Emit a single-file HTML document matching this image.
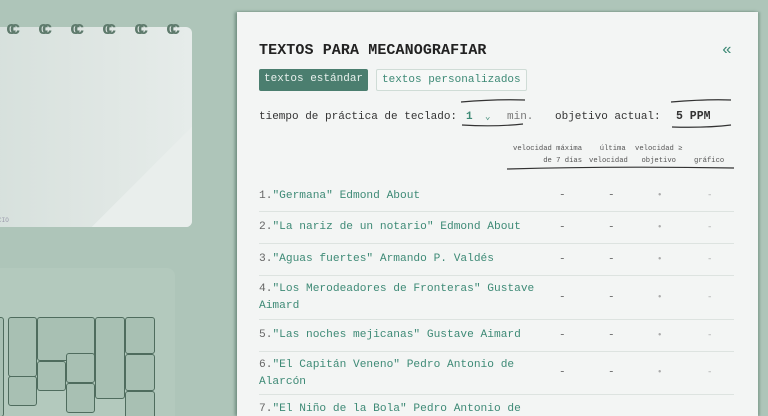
<!DOCTYPE html>
<html><head><meta charset="utf-8"><style>
*{margin:0;padding:0;box-sizing:border-box}
html,body{width:768px;height:416px;overflow:hidden}
body{background:#aec5b9;font-family:"Liberation Mono",monospace;position:relative}
.note{position:absolute;left:-10px;top:27px;width:202px;height:200px;border-radius:6px;background:linear-gradient(90deg,#d6e0dc,#e0e7e4 60%,#e6ecea);overflow:hidden}
.note:after{content:"";position:absolute;right:0;bottom:0;width:100px;height:100px;background:linear-gradient(135deg,transparent 50%,#e9eeec 50%)}
.ring{position:absolute;top:20px;font-size:18px;color:#5e7a6c;font-weight:bold;letter-spacing:-7px}
.kb{position:absolute;left:-10px;top:268px;width:185px;height:148px;border-radius:8px 8px 0 0;background:#b3c9bd;overflow:hidden}
.key{position:absolute;border:1.5px solid #4f6c5e;border-radius:3px;background:#a8c0b3}
.panel{position:absolute;left:237px;top:12px;width:521px;height:404px;background:#f3f5f4;box-shadow:-2px 0 3px #6f8c7e, 2px 0 2px #8aa597;overflow:hidden}
h1{position:absolute;left:22px;top:30px;font-size:15px;font-weight:bold;color:#222;letter-spacing:0.1px}
.dbl{position:absolute;left:485px;top:29px;color:#3e8a76;font-size:16px}
.tab{position:absolute;top:57px;height:22px;font-size:11px;line-height:20px;padding:0 5px;border-radius:2px}
.t1{left:22px;background:#4b7e6f;color:#e8f0ed}
.t2{left:139px;border:1px solid #cfdcd6;color:#3e8a76;background:#f6f8f7}
.r{position:absolute;top:99px;font-size:11px;color:#333;white-space:pre}
.hd{position:absolute;font-size:7.2px;color:#555;white-space:pre;text-align:right;line-height:12px}
.list{position:absolute;left:22px;top:168px;width:475px}
.it{border-bottom:1.5px solid #dde3e0;font-size:11.2px;color:#3e8a76;position:relative;line-height:17px}
.it b{font-weight:normal;color:#666}
.c{position:absolute;top:50%;transform:translateY(-50%);color:#666;font-size:11px}
.d{color:#aaa;font-size:9px}
</style></head><body>
<div class="note"><div style="position:absolute;left:8px;bottom:3px;font-size:6px;color:#99a">CIO</div></div>
<div class="ring" style="left:6px">cc</div><div class="ring" style="left:38px">cc</div><div class="ring" style="left:70px">cc</div><div class="ring" style="left:102px">cc</div><div class="ring" style="left:134px">cc</div><div class="ring" style="left:166px">cc</div>
<div class="kb">
<div style="position:absolute;left:10px;top:-268px;width:185px;height:416px">
<div class="key" style="left:-5px;top:317px;width:9px;height:100px"></div>
<div class="key" style="left:8px;top:317px;width:29px;height:60px"></div>
<div class="key" style="left:8px;top:376px;width:29px;height:30px"></div>
<div class="key" style="left:37px;top:317px;width:58px;height:44px"></div>
<div class="key" style="left:37px;top:361px;width:29px;height:30px"></div>
<div class="key" style="left:66px;top:353px;width:29px;height:30px"></div>
<div class="key" style="left:66px;top:383px;width:29px;height:30px"></div>
<div class="key" style="left:95px;top:317px;width:30px;height:82px"></div>
<div class="key" style="left:125px;top:317px;width:30px;height:37px"></div>
<div class="key" style="left:125px;top:354px;width:30px;height:37px"></div>
<div class="key" style="left:125px;top:391px;width:30px;height:37px"></div>
</div></div>
<div class="panel">
<h1>TEXTOS PARA MECANOGRAFIAR</h1>
<div class="dbl">«</div>
<div class="tab t1">textos estándar</div>
<div class="tab t2">textos personalizados</div>
<div class="r" style="left:22px">tiempo de práctica de teclado:</div>
<div class="r" style="left:229px;color:#3e8a76;font-weight:bold">1</div>
<div class="r" style="left:248px;color:#3e8a76;font-size:9px;top:100px">⌄</div>
<div class="r" style="left:270px;color:#777">min.</div>
<div class="r" style="left:318px">objetivo actual:</div>
<div class="r" style="left:439px;font-weight:bold;font-size:11.5px;top:98px">5 PPM</div>
<svg style="position:absolute;left:0;top:0" width="521" height="170"><g stroke="#333" fill="none" stroke-width="1.2">
<path d="M224 90 Q260 87 288 88"/><path d="M225 113 Q258 115 286 112"/><path d="M434 90 Q470 87 494 88"/><path d="M435 115 Q470 116 494 113"/><path d="M270 157 Q380 154 497 156"/></g></svg>
<div class="hd" style="left:276px;top:131px">velocidad máxima
       de 7 días</div>
<div class="hd" style="left:352px;top:131px;text-align:center">  última
velocidad</div>
<div class="hd" style="left:398px;top:131px;text-align:center">velocidad ≥
objetivo</div>
<div class="hd" style="left:457px;top:143px">gráfico</div>
<div class="list">
<div class="it" style="height:32px;padding-top:8px"><b>1.</b>"Germana" Edmond About<span class="c" style="left:300px">-</span><span class="c" style="left:349px">-</span><span class="c d" style="left:398px">•</span><span class="c d" style="left:448px">-</span></div>
<div class="it" style="height:32px;padding-top:7px"><b>2.</b>"La nariz de un notario" Edmond About<span class="c" style="left:300px">-</span><span class="c" style="left:349px">-</span><span class="c d" style="left:398px">•</span><span class="c d" style="left:448px">-</span></div>
<div class="it" style="height:32px;padding-top:7px"><b>3.</b>"Aguas fuertes" Armando P. Valdés<span class="c" style="left:300px">-</span><span class="c" style="left:349px">-</span><span class="c d" style="left:398px">•</span><span class="c d" style="left:448px">-</span></div>
<div class="it" style="height:44px;padding-top:5px"><b>4.</b>"Los Merodeadores de Fronteras" Gustave<br>Aimard<span class="c" style="left:300px">-</span><span class="c" style="left:349px">-</span><span class="c d" style="left:398px">•</span><span class="c d" style="left:448px">-</span></div>
<div class="it" style="height:32px;padding-top:7px"><b>5.</b>"Las noches mejicanas" Gustave Aimard<span class="c" style="left:300px">-</span><span class="c" style="left:349px">-</span><span class="c d" style="left:398px">•</span><span class="c d" style="left:448px">-</span></div>
<div class="it" style="height:43px;padding-top:5px"><b>6.</b>"El Capitán Veneno" Pedro Antonio de<br>Alarcón<span class="c" style="left:300px">-</span><span class="c" style="left:349px">-</span><span class="c d" style="left:398px">•</span><span class="c d" style="left:448px">-</span></div>
<div class="it" style="height:43px;padding-top:6px;border:0"><b>7.</b>"El Niño de la Bola" Pedro Antonio de</div>
</div>
</div>
</body></html>
